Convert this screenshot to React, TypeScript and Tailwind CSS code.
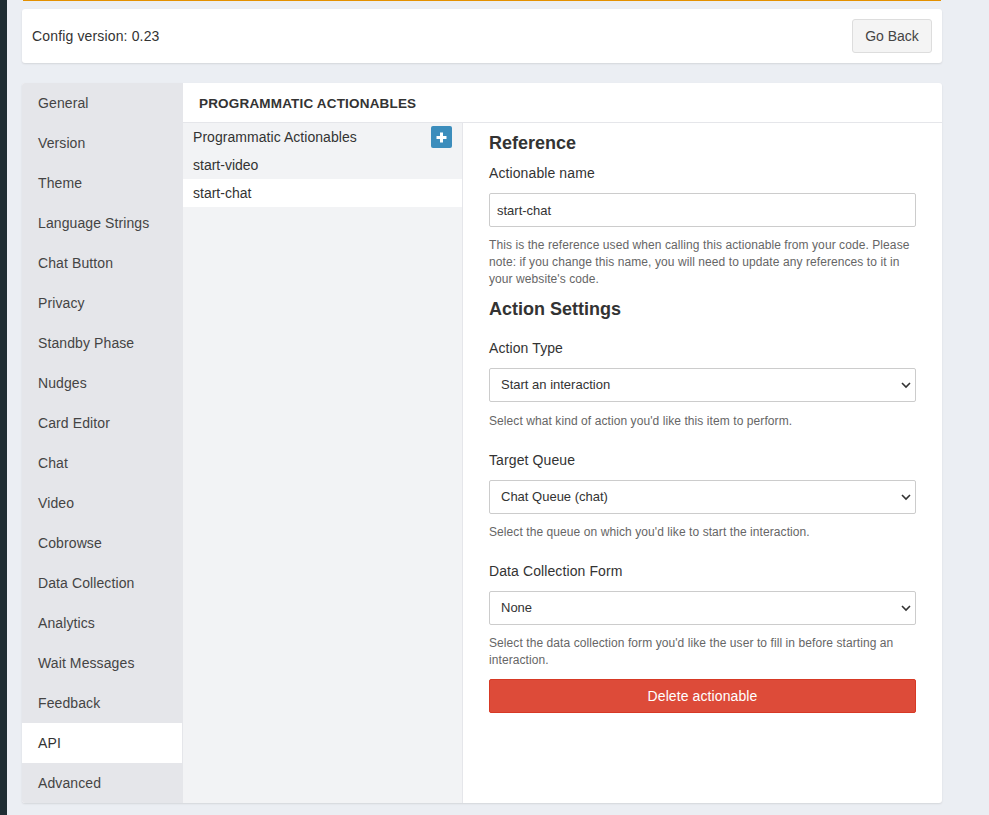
const navItems = [
  'General',
  'Version',
  'Theme',
  'Language Strings',
  'Chat Button',
  'Privacy',
  'Standby Phase',
  'Nudges',
  'Card Editor',
  'Chat',
  'Video',
  'Cobrowse',
  'Data Collection',
  'Analytics',
  'Wait Messages',
  'Feedback',
  'API',
  'Advanced',
];

function SelectField({
  label,
  value,
  help,
  className,
  helpClassName,
}: {
  label: string;
  value: string;
  help: string;
  className: string;
  helpClassName: string;
}) {
  return (
    <div className={className}>
      <div className="text-sm leading-5 tracking-[0.1px] text-[#333]">{label}</div>
      <div className="relative mt-[10px]">
        <select
          defaultValue={value}
          className="block h-[34px] w-full appearance-none rounded-[2px] border border-[#ccc] bg-white pl-[11px] text-[13px] text-[#333]"
        >
          <option>{value}</option>
        </select>
        <svg
          className="pointer-events-none absolute right-[5px] top-[14px]"
          width="10"
          height="7"
          viewBox="0 0 10 7"
          fill="none"
        >
          <path d="M1 1l4 4 4-4" stroke="#333" strokeWidth="1.6" />
        </svg>
      </div>
      <p className={`${helpClassName} text-xs leading-[17px] tracking-[0.08px] text-[#666]`}>{help}</p>
    </div>
  );
}

export default function App() {
  return (
    <div className="flex h-[815px] overflow-hidden bg-[#ebeef3] font-['Liberation_Sans',sans-serif] text-[#333]">
      <div className="w-[7px] shrink-0 bg-[#1f2d33]" />
      <div className="ml-[15px] w-[920px] shrink-0">
        <div className="ml-px h-px w-[918px] bg-[#e39000]" />
        <div className="mt-2 flex h-[54px] items-center justify-between rounded-[3px] bg-white pl-[10px] pr-[10px] shadow-[0_1px_2px_rgba(0,0,0,0.1)]">
          <span className="text-sm tracking-[0.15px]">Config version: 0.23</span>
          <button className="h-[34px] w-[80px] rounded-[3px] border border-[#ddd] bg-[#f4f4f4] text-sm text-[#444]">
            Go Back
          </button>
        </div>

        <div className="mt-5 flex h-[720px] overflow-hidden rounded-[3px] bg-white shadow-[0_1px_2px_rgba(0,0,0,0.1)]">
          <div className="w-[161px] shrink-0 bg-[#e5e6ea] pr-px">
            {navItems.map((item) => (
              <div
                key={item}
                className={`flex h-10 items-center pl-4 text-sm tracking-[0.1px] ${
                  item === 'API' ? 'bg-white text-[#333]' : 'text-[#444]'
                }`}
              >
                {item}
              </div>
            ))}
          </div>

          <div className="flex min-w-0 flex-1 flex-col">
            <div className="flex h-10 shrink-0 items-center border-b border-[#e5e6ea] pl-4 pt-[3px] text-[13.5px] font-bold uppercase tracking-[0.18px] text-[#333]">
              Programmatic Actionables
            </div>
            <div className="flex min-h-0 flex-1">
              <div className="w-[280px] shrink-0 border-r border-[#e5e6ea] bg-[#f2f3f5] text-sm">
                <div className="flex h-7 items-center justify-between pl-[10px] pr-[10px]">
                  <span className="tracking-[0.05px]">Programmatic Actionables</span>
                  <button className="flex h-[22px] w-[21px] items-center justify-center rounded-[2px] bg-[#3c8dbc]">
                    <svg width="11" height="11" viewBox="0 0 11 11">
                      <path d="M4 0.5h3v3.5h3.5v3H7v3.5H4V7H0.5V4H4z" fill="#fff" />
                    </svg>
                  </button>
                </div>
                <div className="flex h-7 items-center pl-[10px]">start-video</div>
                <div className="flex h-7 items-center bg-white pl-[10px]">start-chat</div>
              </div>

              <div className="min-w-0 flex-1 pl-[26px] pr-[26px]">
                <h3 className="mt-[8px] text-lg font-bold leading-6 text-[#333]">Reference</h3>
                <div className="mt-[8px] text-sm leading-5 tracking-[0.1px]">Actionable name</div>
                <input
                  defaultValue="start-chat"
                  className="mt-[10px] block h-[34px] w-full rounded-[2px] border border-[#ccc] bg-white pl-[7px] text-[13px] text-[#333]"
                />
                <p className="mt-[10px] text-xs leading-[17px] tracking-[0.08px] text-[#666]">
                  This is the reference used when calling this actionable from your code. Please
                  note: if you change this name, you will need to update any references to it in
                  your website's code.
                </p>
                <h3 className="mt-[9px] text-lg font-bold leading-6 text-[#333]">Action Settings</h3>
                <SelectField
                  className="mt-[17px]"
                  helpClassName="mt-[11px]"
                  label="Action Type"
                  value="Start an interaction"
                  help="Select what kind of action you'd like this item to perform."
                />
                <SelectField
                  className="mt-[20px]"
                  helpClassName="mt-[10px]"
                  label="Target Queue"
                  value="Chat Queue (chat)"
                  help="Select the queue on which you'd like to start the interaction."
                />
                <SelectField
                  className="mt-[20px]"
                  helpClassName="mt-[10px]"
                  label="Data Collection Form"
                  value="None"
                  help="Select the data collection form you'd like the user to fill in before starting an interaction."
                />
                <button className="mt-[10px] block h-[34px] w-full rounded-[2px] border border-[#d73925] bg-[#dd4b39] text-sm tracking-[0.1px] text-white">
                  Delete actionable
                </button>
              </div>
            </div>
          </div>
        </div>
      </div>
    </div>
  );
}
